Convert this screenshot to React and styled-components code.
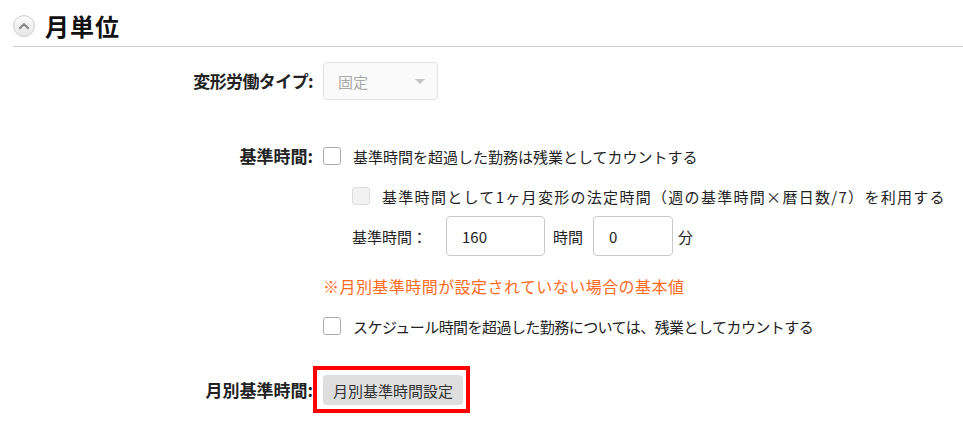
import React from 'react';
import styled, { createGlobalStyle } from 'styled-components';

const Global = createGlobalStyle`
    body {
        margin: 0;
        background: #fff;
        font-family: "Noto Sans CJK JP", "Noto Sans", sans-serif;
        color: #222;
    }
`;

const Page = styled.div`
    padding-left: 13px;
    min-height: 437px;
`;

const Header = styled.header`
    display: flex;
    align-items: center;
    gap: 10px;
    height: 47px;
    border-bottom: 1px solid #cfcfcf;
    box-sizing: border-box;
    padding-top: 5px;

    h2 {
        margin: 0;
        font-size: 24px;
        font-weight: 700;
        letter-spacing: 1px;
        color: #111;
    }
`;

const Toggle = styled.span`
    width: 22px;
    height: 22px;
    border-radius: 50%;
    border: 1px solid #cfcfcf;
    background: linear-gradient(#fbfbfb, #e6e6e6);
    box-sizing: border-box;
    display: flex;
    align-items: center;
    justify-content: center;
    flex: none;
`;

const Form = styled.div`
    padding-top: 15px;
`;

const Row = styled.div`
    display: grid;
    grid-template-columns: 300px 1fr;
    column-gap: 10px;
    margin-top: ${p => p.$mt || 0}px;
`;

const Label = styled.div`
    text-align: right;
    font-weight: 700;
    font-size: 17px;
    letter-spacing: ${p => p.$ls || 0}px;
    line-height: ${p => p.$lh || 24}px;
    white-space: nowrap;
`;

const Controls = styled.div`
    display: flex;
    flex-direction: column;
`;

const Line = styled.div`
    display: flex;
    align-items: center;
    height: ${p => p.$h || 24}px;
    margin-top: ${p => p.$mt || 0}px;
    padding-left: ${p => p.$indent || 0}px;
    font-size: 15px;
    letter-spacing: ${p => p.$ls || 0}px;
    white-space: nowrap;
`;

const Select = styled.div`
    width: 115px;
    height: 38px;
    box-sizing: border-box;
    border: 1px solid #e2e2e2;
    border-radius: 4px;
    background: #fafafa;
    display: flex;
    align-items: center;
    justify-content: space-between;
    padding: 0 12px 0 14px;
    color: #a8a8a8;
    font-size: 15px;

    &::after {
        content: "";
        border-left: 5px solid transparent;
        border-right: 5px solid transparent;
        border-top: 5px solid #c4c4c4;
    }
`;

const Box = styled.span`
    width: 18px;
    height: 18px;
    box-sizing: border-box;
    border: 1px solid ${p => (p.$disabled ? '#dcdcdc' : '#a9a9a9')};
    background: ${p => (p.$disabled ? '#f2f2f2' : '#fff')};
    border-radius: 3px;
    margin-right: 12px;
    flex: none;
`;

const Input = styled.div`
    width: ${p => p.$w}px;
    height: 40px;
    box-sizing: border-box;
    border: 1px solid #c8c8c8;
    border-radius: 4px;
    padding-left: 15px;
    display: flex;
    align-items: center;
    font-size: 15px;
    margin: 0 ${p => p.$mr || 0}px 0 ${p => p.$ml || 0}px;
`;

const Note = styled(Line)`
    color: #ff6a1c;
    font-size: 16px;
`;

const Highlight = styled.span`
    position: relative;
    display: inline-flex;

    &::after {
        content: "";
        position: absolute;
        top: -9px;
        left: -10px;
        right: -7px;
        bottom: -8px;
        border: 4px solid #f00;
    }
`;

const Button = styled.button`
    height: 30px;
    padding: 0 10px;
    border: none;
    border-radius: 4px;
    background: #dedede;
    color: #333;
    font-family: inherit;
    font-size: 15px;
`;

export default function App() {
    return (
        <Page>
            <Global />
            <Header>
                <Toggle>
                    <svg width="14" height="14" viewBox="0 0 12 12">
                        <path d="M2.5 7.8 L6 4.5 L9.5 7.8" fill="none" stroke="#888" strokeWidth="1.9" strokeLinecap="round" strokeLinejoin="round" />
                    </svg>
                </Toggle>
                <h2>月単位</h2>
            </Header>
            <Form>
                <Row>
                    <Label $lh={38} $ls={-0.6}>変形労働タイプ:</Label>
                    <Controls>
                        <Select>固定</Select>
                    </Controls>
                </Row>
                <Row $mt={44}>
                    <Label>基準時間:</Label>
                    <Controls>
                        <Line>
                            <Box />基準時間を超過した勤務は残業としてカウントする
                        </Line>
                        <Line $mt={16} $indent={29} $ls={1.3}>
                            <Box $disabled />基準時間として1ヶ月変形の法定時間（週の基準時間×暦日数/7）を利用する
                        </Line>
                        <Line $h={40} $mt={8} $indent={29}>
                            基準時間：
                            <Input $w={99} $ml={19} $mr={8}>160</Input>
                            時間
                            <Input $w={80} $ml={10} $mr={5}>0</Input>
                            分
                        </Line>
                        <Note $mt={18} $ls={0.45}>※月別基準時間が設定されていない場合の基本値</Note>
                        <Line $mt={16} $ls={-0.55}>
                            <Box />スケジュール時間を超過した勤務については、残業としてカウントする
                        </Line>
                    </Controls>
                </Row>
                <Row $mt={37}>
                    <Label $lh={30}>月別基準時間:</Label>
                    <Controls>
                        <Line $h={30}>
                            <Highlight>
                                <Button>月別基準時間設定</Button>
                            </Highlight>
                        </Line>
                    </Controls>
                </Row>
            </Form>
        </Page>
    );
}
